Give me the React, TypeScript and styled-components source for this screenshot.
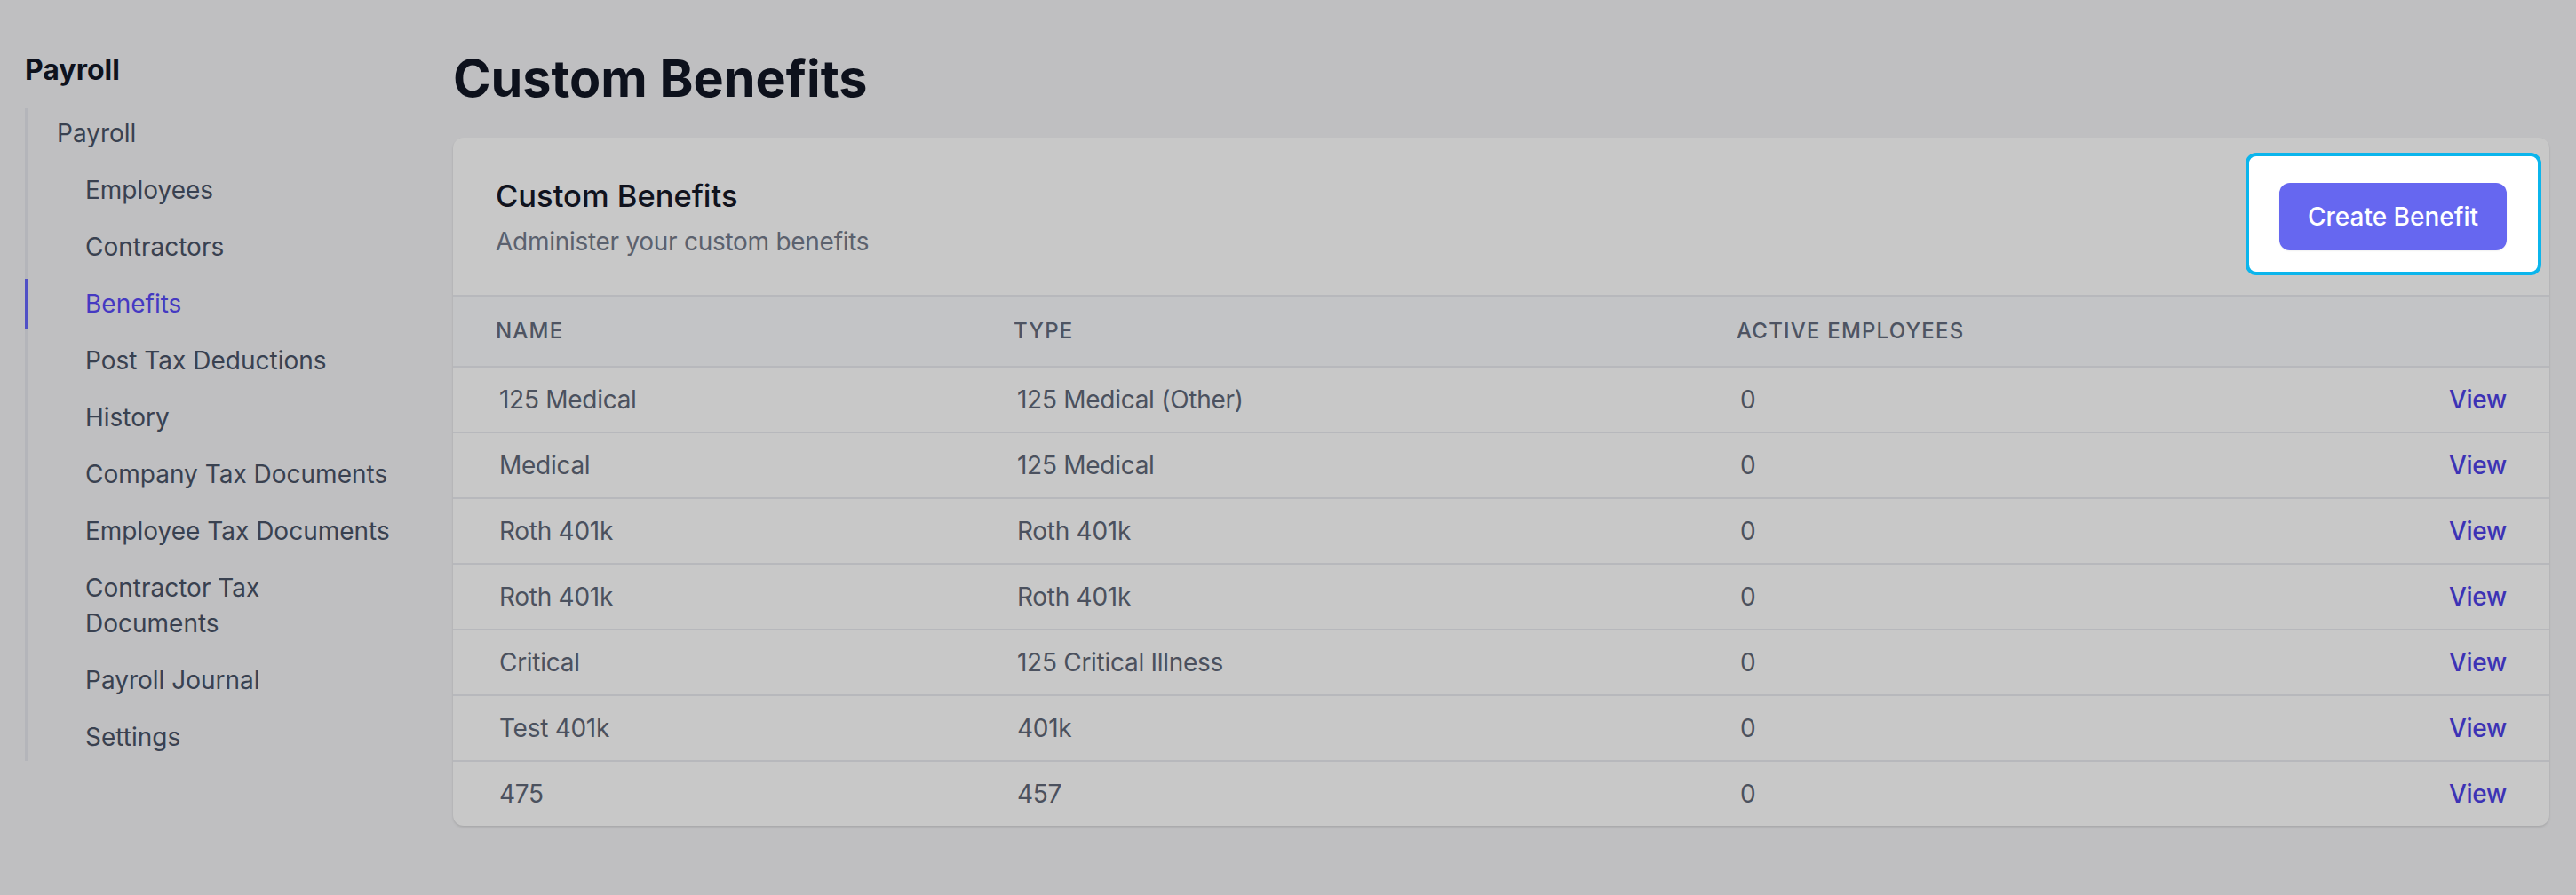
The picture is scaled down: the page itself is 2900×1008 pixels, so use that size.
import React from "react";
import styled, { createGlobalStyle } from "styled-components";

const GlobalStyle = createGlobalStyle`
  html, body {
    margin: 0;
    padding: 0;
    background: #bfbfc1;
  }

  body {
    font-family: Inter, "Noto Sans", "Liberation Sans", sans-serif;
    -webkit-font-smoothing: antialiased;
  }

  * {
    box-sizing: border-box;
  }
`;

const Page = styled.div`
  display: flex;
  width: 2900px;
  min-height: 1008px;
`;

const Sidebar = styled.aside`
  flex-shrink: 0;
  width: 440px;
  padding: 59px 0 0 28px;
`;

const SideHeading = styled.h2`
  margin: 0 0 19px;
  font-size: 32px;
  line-height: 40px;
  font-weight: 700;
  color: #0e121d;
`;

const NavList = styled.ul`
  position: relative;
  margin: 0;
  padding: 0;
  list-style: none;

  &::before {
    content: "";
    position: absolute;
    left: 0;
    top: 4px;
    bottom: 5px;
    width: 4px;
    background: #b4b5ba;
  }
`;

const NavItem = styled.li<{ $level: number; $active?: boolean }>`
  position: relative;
  padding: 12px 0 12px ${(p) => (p.$level === 1 ? 36 : 68)}px;
  font-size: 28px;
  line-height: 40px;
  color: ${(p) => (p.$active ? "#4539c2" : "#394150")};

  &::before {
    content: "";
    display: ${(p) => (p.$active ? "block" : "none")};
    position: absolute;
    left: 0;
    top: 4px;
    bottom: 4px;
    width: 4px;
    background: #5050c6;
  }
`;

const Main = styled.main`
  flex: 1;
  padding: 56px 30px 0 70px;
`;

const PageTitle = styled.h1`
  margin: 0 0 35px;
  font-size: 57.5px;
  line-height: 64px;
  font-weight: 700;
  color: #0d111c;
`;

const Card = styled.section`
  background: #c8c8c8;
  border-radius: 12px;
  box-shadow: 0 2px 3px rgba(0, 0, 0, 0.08), 0 1px 2px rgba(0, 0, 0, 0.05);
`;

const CardHeader = styled.div`
  display: flex;
  align-items: center;
  justify-content: space-between;
  padding: 40px 48px;
  border-bottom: 2px solid #b7b8bc;
`;

const CardTitle = styled.h3`
  margin: 0;
  font-size: 34.5px;
  line-height: 52px;
  font-weight: 500;
  color: #10131e;
`;

const CardSubtitle = styled.p`
  margin: 5px 0 0;
  font-size: 28px;
  line-height: 40px;
  letter-spacing: -0.01em;
  color: #5b616e;
`;

const Spotlight = styled.div`
  position: relative;
  z-index: 0;
`;

const SpotlightFrame = styled.span`
  position: absolute;
  top: -34px;
  right: -39px;
  bottom: -28px;
  left: -38px;
  z-index: -1;
  background: #ffffff;
  border: 4px solid #0bb5ec;
  border-radius: 12px;
`;

const PrimaryButton = styled.button`
  display: block;
  padding: 18px 32px;
  border: none;
  border-radius: 12px;
  background: #6667f0;
  color: #ffffff;
  font-family: inherit;
  font-size: 28px;
  line-height: 40px;
  font-weight: 500;
  box-shadow: 0 1px 2px rgba(0, 0, 0, 0.06);
  cursor: pointer;
`;

const gridColumns = "583px 814px 1fr auto";

const HeadRow = styled.div`
  display: grid;
  grid-template-columns: ${gridColumns};
  align-items: center;
  height: 80px;
  padding: 0 48px;
  background: #c3c4c6;
  border-bottom: 2px solid #b7b8bc;
`;

const HeadCell = styled.span`
  font-size: 24px;
  line-height: 32px;
  font-weight: 500;
  letter-spacing: 0.05em;
  text-transform: uppercase;
  color: #4e5462;
`;

const BodyRow = styled.div`
  display: grid;
  grid-template-columns: ${gridColumns};
  align-items: center;
  height: 74px;
  padding: 0 48px;
  border-bottom: 2px solid #b7b8bc;

  &:last-child {
    height: 72px;
    border-bottom: none;
  }
`;

const BodyCell = styled.span`
  padding-left: 4px;
  font-size: 28px;
  line-height: 40px;
  letter-spacing: -0.01em;
  color: #4b515e;
`;

const ViewLink = styled.a`
  font-size: 28px;
  line-height: 40px;
  font-weight: 500;
  letter-spacing: -0.01em;
  color: #3c33b5;
  text-decoration: none;
  text-align: right;
`;

const navItems = [
  { label: "Payroll", level: 1 },
  { label: "Employees", level: 2 },
  { label: "Contractors", level: 2 },
  { label: "Benefits", level: 2, active: true },
  { label: "Post Tax Deductions", level: 2 },
  { label: "History", level: 2 },
  { label: "Company Tax Documents", level: 2 },
  { label: "Employee Tax Documents", level: 2 },
  { label: "Contractor Tax Documents", level: 2 },
  { label: "Payroll Journal", level: 2 },
  { label: "Settings", level: 2 },
];

const benefits = [
  { name: "125 Medical", type: "125 Medical (Other)", active: 0 },
  { name: "Medical", type: "125 Medical", active: 0 },
  { name: "Roth 401k", type: "Roth 401k", active: 0 },
  { name: "Roth 401k", type: "Roth 401k", active: 0 },
  { name: "Critical", type: "125 Critical Illness", active: 0 },
  { name: "Test 401k", type: "401k", active: 0 },
  { name: "475", type: "457", active: 0 },
];

const App = () => {
  return (
    <>
      <GlobalStyle />
      <Page>
        <Sidebar>
          <SideHeading>Payroll</SideHeading>
          <NavList>
            {navItems.map((item) => (
              <NavItem key={item.label} $level={item.level} $active={item.active}>
                {item.label}
              </NavItem>
            ))}
          </NavList>
        </Sidebar>

        <Main>
          <PageTitle>Custom Benefits</PageTitle>
          <Card>
            <CardHeader>
              <div>
                <CardTitle>Custom Benefits</CardTitle>
                <CardSubtitle>Administer your custom benefits</CardSubtitle>
              </div>
              <Spotlight>
                <SpotlightFrame />
                <PrimaryButton>Create Benefit</PrimaryButton>
              </Spotlight>
            </CardHeader>

            <HeadRow>
              <HeadCell>Name</HeadCell>
              <HeadCell>Type</HeadCell>
              <HeadCell>Active Employees</HeadCell>
              <span />
            </HeadRow>
            {benefits.map((b, i) => (
              <BodyRow key={i}>
                <BodyCell>{b.name}</BodyCell>
                <BodyCell>{b.type}</BodyCell>
                <BodyCell>{b.active}</BodyCell>
                <ViewLink href="#">View</ViewLink>
              </BodyRow>
            ))}
          </Card>
        </Main>
      </Page>
    </>
  );
};

export default App;
